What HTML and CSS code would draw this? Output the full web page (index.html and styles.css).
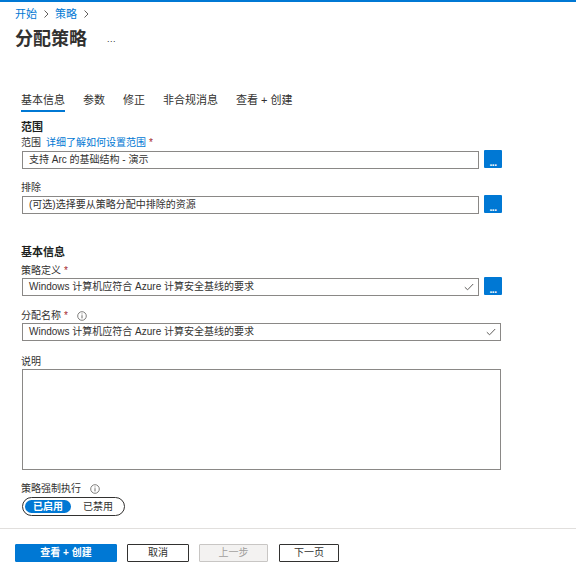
FILE: index.html
```html
<!DOCTYPE html>
<html lang="zh-CN">
<head>
<meta charset="utf-8">
<title>分配策略</title>
<link rel="stylesheet" href="styles.css">
</head>
<body>
<div class="topbar"></div>
<header class="header">
  <nav class="crumbs">
    <a class="crumb">开始</a>
    <svg class="chev" width="8" height="10" viewBox="0 0 8 10"><path d="M2.5 1.5 L6 5 L2.5 8.5" fill="none" stroke="#605e5c" stroke-width="1"/></svg>
    <a class="crumb">策略</a>
    <svg class="chev" width="8" height="10" viewBox="0 0 8 10"><path d="M2.5 1.5 L6 5 L2.5 8.5" fill="none" stroke="#605e5c" stroke-width="1"/></svg>
  </nav>
  <div class="titlerow">
    <h1 class="title">分配策略</h1>
    <span class="more">...</span>
  </div>
</header>

<div class="tabs">
  <span class="tab active">基本信息</span>
  <span class="tab">参数</span>
  <span class="tab">修正</span>
  <span class="tab">非合规消息</span>
  <span class="tab">查看 + 创建</span>
</div>

<main class="form">
  <div class="section-title s1">范围</div>
  <div class="label l1">范围 <a class="link">详细了解如何设置范围</a> <span class="req">*</span></div>
  <div class="row r1">
    <div class="input narrow">支持 Arc 的基础结构 - 演示</div>
    <button class="dots">...</button>
  </div>

  <div class="label l2">排除</div>
  <div class="row r2">
    <div class="input narrow">(可选)选择要从策略分配中排除的资源</div>
    <button class="dots">...</button>
  </div>

  <div class="section-title s2">基本信息</div>
  <div class="label l3">策略定义 <span class="req">*</span></div>
  <div class="row r3">
    <div class="input narrow select">Windows 计算机应符合 Azure 计算安全基线的要求
      <svg class="check" width="10" height="8" viewBox="0 0 10 8"><path d="M0.8 4.2 L3.6 6.8 L9.2 1" fill="none" stroke="#605e5c" stroke-width="1"/></svg>
    </div>
    <button class="dots">...</button>
  </div>

  <div class="label l4">分配名称 <span class="req">*</span>
    <svg class="info" width="10" height="10" viewBox="0 0 10 10"><circle cx="5" cy="5" r="4.3" fill="none" stroke="#605e5c" stroke-width="0.8"/><rect x="4.55" y="4.2" width="0.9" height="3.2" fill="#605e5c"/><rect x="4.55" y="2.5" width="0.9" height="0.9" fill="#605e5c"/></svg>
  </div>
  <div class="row r4">
    <div class="input wide select">Windows 计算机应符合 Azure 计算安全基线的要求
      <svg class="check" width="10" height="8" viewBox="0 0 10 8"><path d="M0.8 4.2 L3.6 6.8 L9.2 1" fill="none" stroke="#605e5c" stroke-width="1"/></svg>
    </div>
  </div>

  <div class="label l5">说明</div>
  <div class="textarea"></div>

  <div class="label l6">策略强制执行
    <svg class="info" width="10" height="10" viewBox="0 0 10 10"><circle cx="5" cy="5" r="4.3" fill="none" stroke="#605e5c" stroke-width="0.8"/><rect x="4.55" y="4.2" width="0.9" height="3.2" fill="#605e5c"/><rect x="4.55" y="2.5" width="0.9" height="0.9" fill="#605e5c"/></svg>
  </div>
  <div class="toggle">
    <span class="opt on">已启用</span>
    <span class="opt">已禁用</span>
  </div>
</main>

<footer class="footer">
  <button class="btn primary">查看 + 创建</button>
  <button class="btn b-cancel">取消</button>
  <button class="btn disabled b-prev">上一步</button>
  <button class="btn b-next">下一页</button>
</footer>
</body>
</html>
```

FILE: styles.css
```css
* { box-sizing: border-box; }
html, body { margin: 0; padding: 0; background: #fff; }
body {
  width: 576px;
  height: 576px;
  overflow: hidden;
  font-family: "Liberation Sans", "Noto Sans CJK SC", sans-serif;
  font-size: 11px;
  color: #323130;
}
.topbar { height: 2px; background: #0078d4; }
.header { padding: 5px 0 0 15px; }
.crumbs { display: flex; align-items: center; height: 14px; line-height: 14px; gap: 3px; }
.crumb { color: #0078d4; }
.chev { margin: 0 2px; }
.titlerow { display: flex; align-items: center; margin-top: 6px; height: 24px; }
.title { margin: 0; font-size: 18px; font-weight: 700; line-height: 24px; color: #323130; }
.more { margin-left: 20px; font-size: 9px; line-height: 9px; color: #323130; letter-spacing: 0.5px; padding-top: 1px; }

.tabs { display: flex; gap: 18px; margin: 42px 0 0 21px; height: 19px; }
.tab { line-height: 14px; height: 19px; }
.tab.active { border-bottom: 2px solid #0078d4; }

.form { padding-left: 21px; }
.section-title { font-weight: 700; line-height: 13px; color: #201f1e; }
.s1 { margin-top: 9px; }
.s2 { margin-top: 32px; }
.label { font-size: 10px; line-height: 13px; display: flex; align-items: center; gap: 3px; }
.l1 { margin-top: 2px; }
.l2 { margin-top: 12px; }
.l3 { margin-top: 5px; }
.l4 { margin-top: 13px; }
.l5 { margin-top: 14px; }
.l6 { margin-top: 12px; }
.link { color: #0078d4; margin-left: 2px; }
.req { color: #a4262c; }
.info { margin-left: 6px; }

.row { display: flex; align-items: flex-start; gap: 5px; margin-left: 1px; }
.r1 { margin-top: 2px; }
.r2 { margin-top: 2px; }
.r3 { margin-top: 1px; }
.r4 { margin-top: 1px; }
.input {
  height: 18px;
  border: 1px solid #8a8886;
  padding-left: 6px;
  font-size: 10px;
  line-height: 16px;
  white-space: nowrap;
  position: relative;
}
.narrow { width: 457px; }
.wide { width: 479px; }
.check { position: absolute; right: 4px; top: 4px; }
.dots {
  width: 18px; height: 18px;
  margin-top: -1px;
  border: 0; border-radius: 1px;
  background: #0078d4; color: #fff;
  font-family: "Liberation Sans", sans-serif;
  font-size: 10px; font-weight: 700;
  line-height: 18px; padding: 4px 0 0 0;
  letter-spacing: -0.5px;
}
.textarea {
  margin: 1px 0 0 1px;
  width: 479px; height: 101px;
  border: 1px solid #8a8886;
}
.toggle {
  margin: 2px 0 0 1px;
  width: 103px; height: 19px;
  border: 1px solid #323130;
  border-radius: 10px;
  display: flex; align-items: center;
  padding-left: 2px;
  font-size: 10px;
}
.opt { line-height: 13px; height: 13px; }
.opt.on {
  width: 46px;
  background: #0078d4; color: #fff; font-weight: 700;
  border-radius: 7px; text-align: center;
}
.opt:not(.on) { margin-left: 12px; }

.footer {
  margin-top: 12px;
  border-top: 1px solid #e1dfdd;
  padding: 15px 0 0 15px;
  display: flex; gap: 10px;
}
.btn {
  height: 18px;
  font-family: "Liberation Sans", "Noto Sans CJK SC", sans-serif;
  font-size: 10px;
  line-height: 14px;
  padding: 0;
  background: #fff;
  border: 1px solid #323130;
  border-radius: 1px;
  color: #323130;
}
.primary { width: 102px; background: #0078d4; border-color: #0078d4; color: #fff; font-weight: 700; }
.b-cancel { width: 62px; }
.b-prev { width: 69px; }
.b-next { width: 60px; margin-left: 1px; }
.disabled { background: #f3f2f1; border-color: #c8c6c4; color: #a19f9d; }
```
